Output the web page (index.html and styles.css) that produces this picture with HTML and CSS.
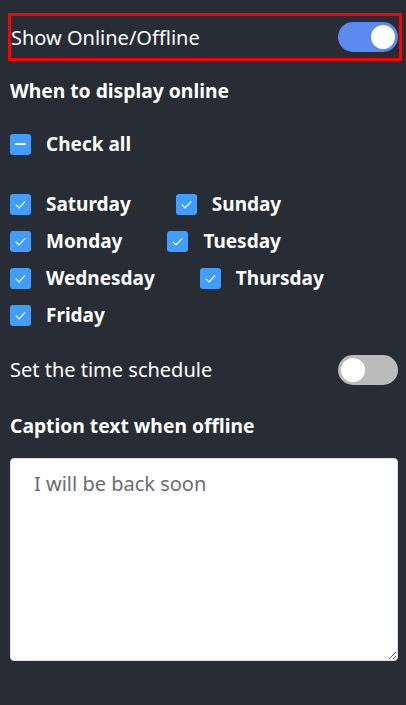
FILE: index.html
```html
<!DOCTYPE html>
<html lang="en">
<head>
<meta charset="utf-8">
<title>Online settings</title>
<link rel="stylesheet" href="styles.css">
</head>
<body>
<div class="panel">
  <div class="row row--framed">
    <span class="row__label">Show Online/Offline</span>
    <span class="switch switch--on"><span class="switch__knob"></span></span>
  </div>

  <h3 class="heading heading--days">When to display online</h3>

  <label class="check check--all">
    <span class="check__box check__box--mixed"><span class="check__dash"></span></span>
    <span class="check__text">Check all</span>
  </label>

  <div class="days">
    <label class="check"><span class="check__box"><svg viewBox="0 0 20 20" class="check__mark"><path d="M5.5 10.2 L8.6 13.2 L14.5 7"/></svg></span><span class="check__text">Saturday</span></label>
    <label class="check"><span class="check__box"><svg viewBox="0 0 20 20" class="check__mark"><path d="M5.5 10.2 L8.6 13.2 L14.5 7"/></svg></span><span class="check__text">Sunday</span></label>
    <label class="check"><span class="check__box"><svg viewBox="0 0 20 20" class="check__mark"><path d="M5.5 10.2 L8.6 13.2 L14.5 7"/></svg></span><span class="check__text">Monday</span></label>
    <label class="check"><span class="check__box"><svg viewBox="0 0 20 20" class="check__mark"><path d="M5.5 10.2 L8.6 13.2 L14.5 7"/></svg></span><span class="check__text">Tuesday</span></label>
    <label class="check"><span class="check__box"><svg viewBox="0 0 20 20" class="check__mark"><path d="M5.5 10.2 L8.6 13.2 L14.5 7"/></svg></span><span class="check__text">Wednesday</span></label>
    <label class="check"><span class="check__box"><svg viewBox="0 0 20 20" class="check__mark"><path d="M5.5 10.2 L8.6 13.2 L14.5 7"/></svg></span><span class="check__text">Thursday</span></label>
    <label class="check"><span class="check__box"><svg viewBox="0 0 20 20" class="check__mark"><path d="M5.5 10.2 L8.6 13.2 L14.5 7"/></svg></span><span class="check__text">Friday</span></label>
  </div>

  <div class="row row--schedule">
    <span class="row__label">Set the time schedule</span>
    <span class="switch"><span class="switch__knob"></span></span>
  </div>

  <h3 class="heading heading--caption">Caption text when offline</h3>

  <textarea class="caption" placeholder="I will be back soon"></textarea>
</div>
</body>
</html>
```
FILE: styles.css
```css
* { box-sizing: border-box; }

html, body {
  margin: 0;
  padding: 0;
  background: #282c35;
}

body {
  font-family: "Noto Sans", "Open Sans", sans-serif;
  color: #ffffff;
}

.panel {
  padding: 13px 8px 0 8px;
  display: flex;
  flex-direction: column;
}

.row {
  display: flex;
  align-items: center;
  justify-content: space-between;
}

.row__label {
  font-size: 20px;
  line-height: 26px;
}

.row--framed {
  height: 48px;
  border: 3px solid #ff0000;
  margin-right: -4px;
  padding-right: 1px;
}

.row--framed .row__label {
  margin-top: 2px;
}

.switch {
  width: 60px;
  height: 30px;
  border-radius: 15px;
  background: #bbbbbb;
  display: flex;
  align-items: center;
  padding: 0 3px;
  flex: none;
}

.switch--on {
  background: #5b8bf0;
  justify-content: flex-end;
}

.switch__knob {
  width: 24px;
  height: 24px;
  border-radius: 50%;
  background: #ffffff;
}

.heading {
  margin: 0;
  font-size: 19.3px;
  font-weight: 700;
  line-height: 24px;
  padding-left: 2px;
}

.heading--days {
  margin-top: 18px;
}

.check {
  display: flex;
  align-items: center;
  height: 22px;
  margin-right: 45px;
  cursor: pointer;
}

.check--all {
  margin-top: 30px;
  padding-left: 2px;
}

.check__box {
  width: 21px;
  height: 21px;
  border-radius: 3px;
  background: #409eff;
  display: flex;
  align-items: center;
  justify-content: center;
  flex: none;
}

.check__dash {
  width: 11px;
  height: 2px;
  background: #ffffff;
  border-radius: 1px;
}

.check__mark {
  width: 21px;
  height: 21px;
  fill: none;
  stroke: #ffffff;
  stroke-width: 1.1;
}

.check__text {
  margin-left: 15px;
  font-size: 19px;
  font-weight: 700;
  line-height: 22px;
}

.days {
  display: flex;
  flex-wrap: wrap;
  row-gap: 15px;
  margin-top: 38px;
  padding-left: 2px;
}

.row--schedule {
  margin-top: 29px;
  padding-left: 2px;
}

.heading--caption {
  margin-top: 29px;
}

.caption {
  margin: 20px 0 0 2px;
  width: 388px;
  height: 203px;
  border: 1px solid #dcdfe6;
  border-radius: 4px;
  background: #ffffff;
  padding: 12px 23px;
  font-family: "Noto Sans", "Open Sans", sans-serif;
  font-size: 20px;
  line-height: 26px;
  color: #606266;
  resize: vertical;
}

.caption::placeholder {
  color: #6b6d72;
}
```
